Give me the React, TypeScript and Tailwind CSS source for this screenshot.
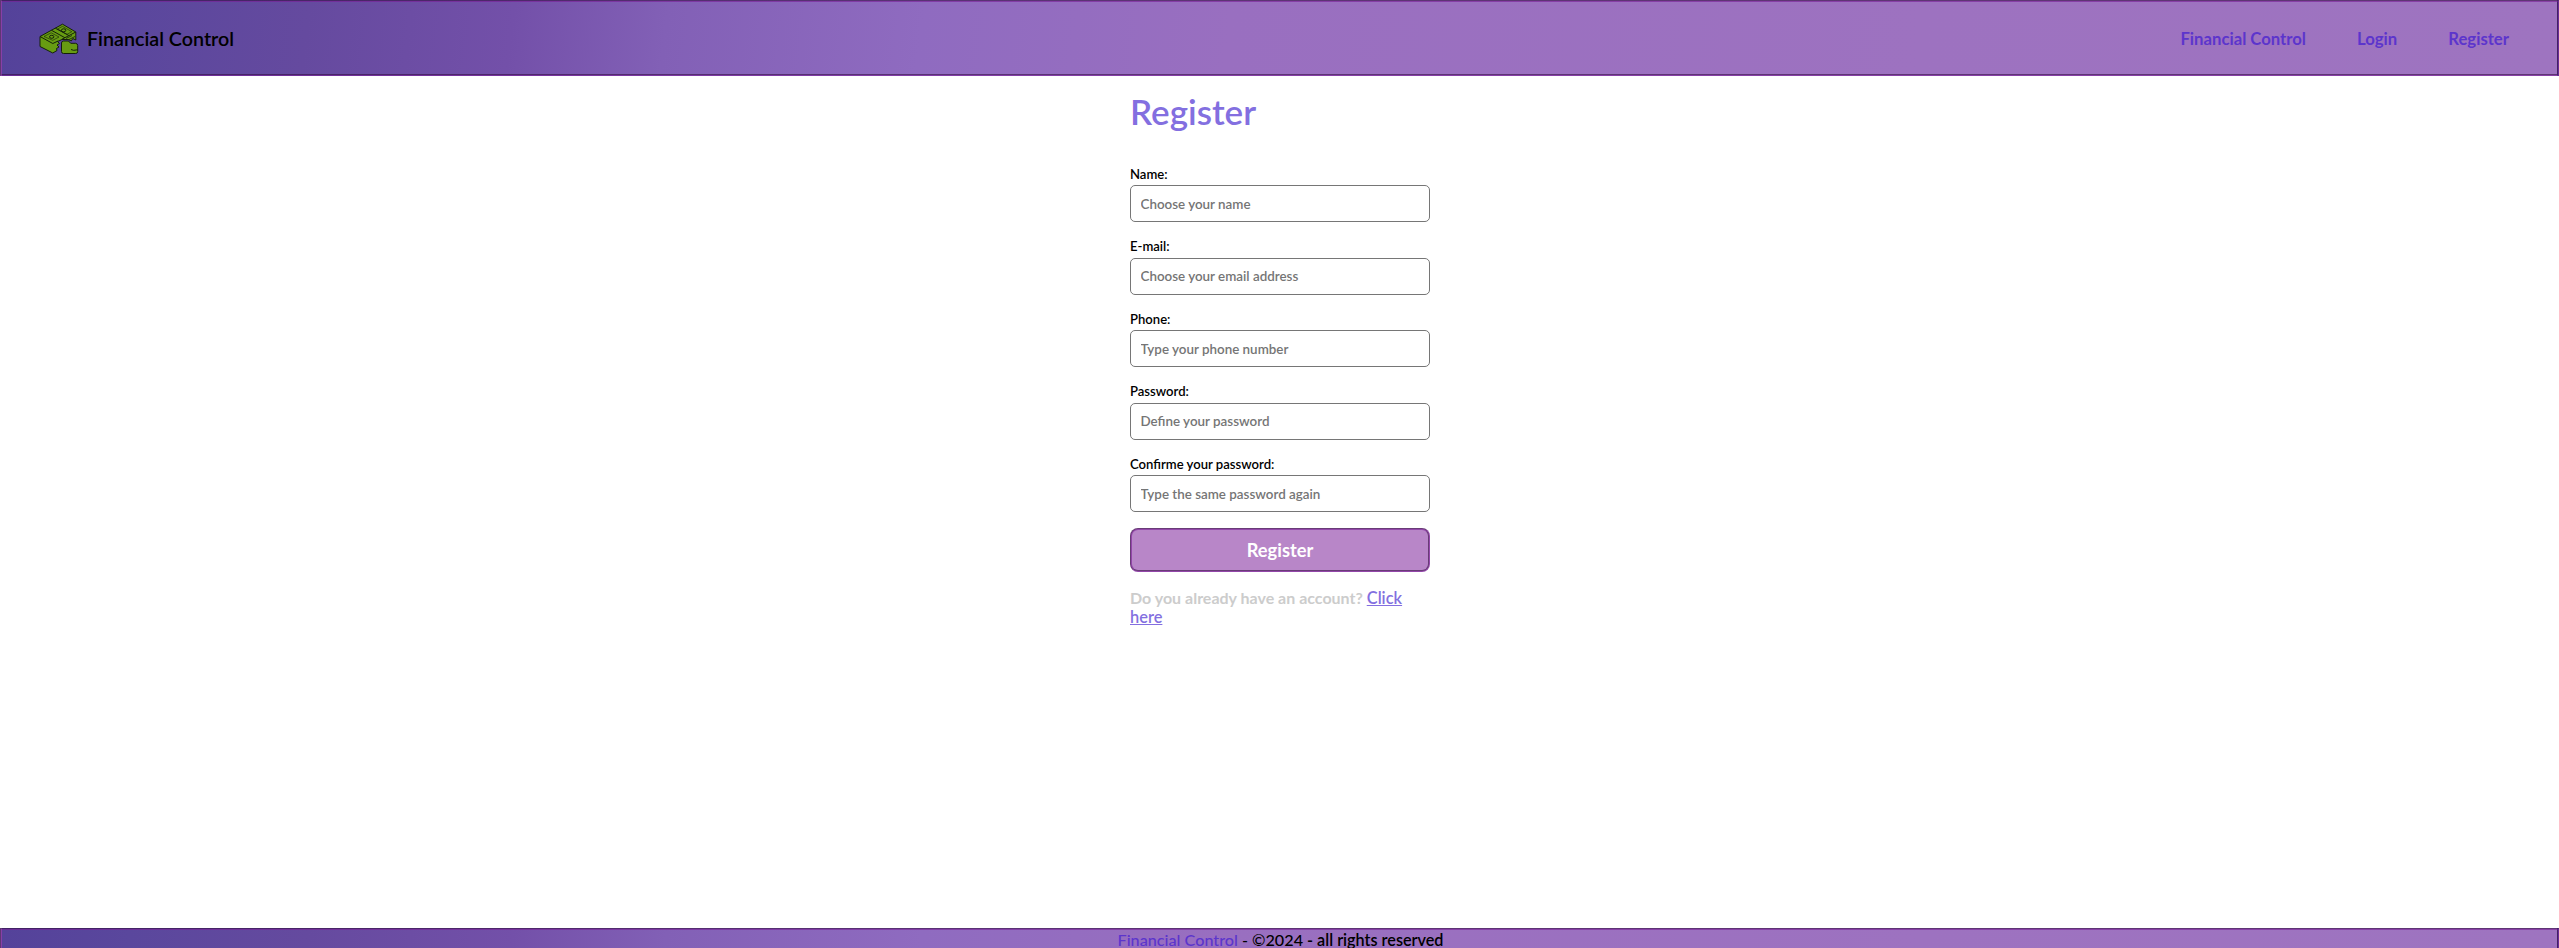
const fields = [
  { label: 'Name:', hint: 'Choose your name', type: 'text' },
  { label: 'E-mail:', hint: 'Choose your email address', type: 'email' },
  { label: 'Phone:', hint: 'Type your phone number', type: 'text' },
  { label: 'Password:', hint: 'Define your password', type: 'password' },
  { label: 'Confirme your password:', hint: 'Type the same password again', type: 'password' },
];

const band =
  '[border-style:groove] border-[rgba(122,30,150,0.6)] bg-[linear-gradient(97deg,#54429a_0%,#5a479d_5%,#654a9f_12%,#7350a9_20%,#8260b6_26%,#8f6bc0_36%,#996fc0_48%,#9d72c0_75%,#9e74c0_100%)]';

function MoneyIcon() {
  return (
    <svg width="40" height="32" viewBox="0 0 40 32" fill="#679c12" stroke="#14200a" strokeWidth="1" strokeLinejoin="round">
      <path d="M1 13.500 23.500 1.200 36.800 9v8l-3-1.500-1.500 2.500-3-1.500H23l-4.500 2 2 2-2.500 1.500 2 2-2.500 1.500.5 2-4.200 2.500L1 23.500Z" />
      <path d="M1 13.500 13.800 20.500 19 18M23 16.200 36.800 9M12.500 7.300 26 14.800M16.300 5.200 30 12.600" fill="none" />
      <path d="m5 13.500 7.200-3.700 7.800 4.200-6.300 3.300ZM18.500 6l5-2.600 9.300 5.300-4.800 2.600Z" strokeWidth=".6" fill="none" />
      <ellipse cx="12.700" cy="13.800" rx="2.200" ry="1.500" />
      <ellipse cx="24.600" cy="7.300" rx="2.200" ry="1.500" />
      <path d="m27 15.500 6-3M29 17l7-3.500" strokeWidth=".8" fill="none" />
      <path d="M22.500 20q0-2 2-2H29.500l2.200 2.300h5q2 .3 2 2.200v6q0 2-2 2H24.500q-2 0-2-2Z" />
      <path d="M32 26.500q2 1.500 6.500.3" fill="none" />
    </svg>
  );
}

export default function App() {
  return (
    <div className="flex h-[948px] flex-col overflow-hidden bg-white font-['Lato',sans-serif] font-bold text-black">
      <header className={`flex h-[76px] shrink-0 items-center justify-between border-2 pt-px pr-12 pl-[37px] ${band}`}>
        <div className="flex items-center gap-2">
          <MoneyIcon />
          <span className="text-[19.700px] leading-6 font-semibold">Financial Control</span>
        </div>
        <nav className="flex gap-[51px] pt-0.5 text-[16.700px] text-[#5c35cc]">
          <a href="#">Financial Control</a>
          <a href="#">Login</a>
          <a href="#">Register</a>
        </nav>
      </header>
      <main className="ml-px flex w-[300px] grow flex-col self-center">
        <h1 className="mt-3.5 h-[75.500px] text-[35px] leading-[42px] font-semibold text-[#836fe0]">Register</h1>
        {fields.map((f) => (
          <label key={f.label} className="flex h-[72.500px] shrink-0 flex-col text-[13.100px] leading-[16px] font-semibold">
            <span className="h-[19.500px]">{f.label}</span>
            <input
              type={f.type}
              placeholder={f.hint}
              className="h-[37px] rounded-[5px] border border-[#767676] px-[9.500px] text-[13.400px] placeholder:text-[#757575]"
            />
          </label>
        ))}
        <button className="h-11 shrink-0 rounded-lg border-2 [border-style:groove] border-[rgba(122,30,150,0.6)] bg-[#b886c8] pt-px text-[18.300px] text-white">Register</button>
        <p className="mt-4 text-base leading-[19px] text-[#ccc]">
          Do you already have an account?{' '}
          <a href="#" className="text-[16.400px] leading-none font-semibold text-[#836fe0] underline">Click here</a>
        </p>
      </main>
      <footer className={`h-5 shrink-0 border-2 border-b-0 pl-0.5 text-center text-[16.200px] leading-[19px] font-semibold ${band}`}>
        <span className="font-medium text-[#5c35cc]">Financial Control</span> <span className="font-medium">- ©2024</span> - all rights reserved
      </footer>
    </div>
  );
}
